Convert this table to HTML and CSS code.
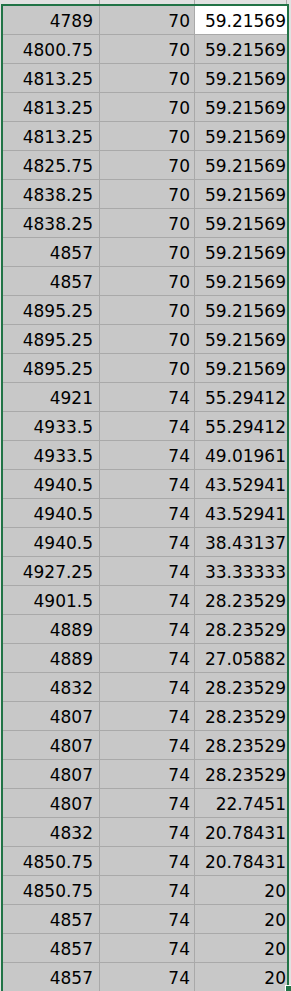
FILE: index.html
```html
<!DOCTYPE html>
<html>
<head>
<meta charset="utf-8">
<link rel="stylesheet" href="styles.css">
</head>
<body>
<div class="sheet">
  <div class="prev-row">
    <div class="pc c1"></div><div class="pc c2"></div><div class="pc c3"></div>
  </div>
  <div class="range">
    <div class="grid">
      <div class="cell c1">4789</div><div class="cell c2">70</div><div class="cell c3 active">59.21569</div>
      <div class="cell c1">4800.75</div><div class="cell c2">70</div><div class="cell c3">59.21569</div>
      <div class="cell c1">4813.25</div><div class="cell c2">70</div><div class="cell c3">59.21569</div>
      <div class="cell c1">4813.25</div><div class="cell c2">70</div><div class="cell c3">59.21569</div>
      <div class="cell c1">4813.25</div><div class="cell c2">70</div><div class="cell c3">59.21569</div>
      <div class="cell c1">4825.75</div><div class="cell c2">70</div><div class="cell c3">59.21569</div>
      <div class="cell c1">4838.25</div><div class="cell c2">70</div><div class="cell c3">59.21569</div>
      <div class="cell c1">4838.25</div><div class="cell c2">70</div><div class="cell c3">59.21569</div>
      <div class="cell c1">4857</div><div class="cell c2">70</div><div class="cell c3">59.21569</div>
      <div class="cell c1">4857</div><div class="cell c2">70</div><div class="cell c3">59.21569</div>
      <div class="cell c1">4895.25</div><div class="cell c2">70</div><div class="cell c3">59.21569</div>
      <div class="cell c1">4895.25</div><div class="cell c2">70</div><div class="cell c3">59.21569</div>
      <div class="cell c1">4895.25</div><div class="cell c2">70</div><div class="cell c3">59.21569</div>
      <div class="cell c1">4921</div><div class="cell c2">74</div><div class="cell c3">55.29412</div>
      <div class="cell c1">4933.5</div><div class="cell c2">74</div><div class="cell c3">55.29412</div>
      <div class="cell c1">4933.5</div><div class="cell c2">74</div><div class="cell c3">49.01961</div>
      <div class="cell c1">4940.5</div><div class="cell c2">74</div><div class="cell c3">43.52941</div>
      <div class="cell c1">4940.5</div><div class="cell c2">74</div><div class="cell c3">43.52941</div>
      <div class="cell c1">4940.5</div><div class="cell c2">74</div><div class="cell c3">38.43137</div>
      <div class="cell c1">4927.25</div><div class="cell c2">74</div><div class="cell c3">33.33333</div>
      <div class="cell c1">4901.5</div><div class="cell c2">74</div><div class="cell c3">28.23529</div>
      <div class="cell c1">4889</div><div class="cell c2">74</div><div class="cell c3">28.23529</div>
      <div class="cell c1">4889</div><div class="cell c2">74</div><div class="cell c3">27.05882</div>
      <div class="cell c1">4832</div><div class="cell c2">74</div><div class="cell c3">28.23529</div>
      <div class="cell c1">4807</div><div class="cell c2">74</div><div class="cell c3">28.23529</div>
      <div class="cell c1">4807</div><div class="cell c2">74</div><div class="cell c3">28.23529</div>
      <div class="cell c1">4807</div><div class="cell c2">74</div><div class="cell c3">28.23529</div>
      <div class="cell c1">4807</div><div class="cell c2">74</div><div class="cell c3">22.7451</div>
      <div class="cell c1">4832</div><div class="cell c2">74</div><div class="cell c3">20.78431</div>
      <div class="cell c1">4850.75</div><div class="cell c2">74</div><div class="cell c3">20.78431</div>
      <div class="cell c1">4850.75</div><div class="cell c2">74</div><div class="cell c3">20</div>
      <div class="cell c1">4857</div><div class="cell c2">74</div><div class="cell c3">20</div>
      <div class="cell c1">4857</div><div class="cell c2">74</div><div class="cell c3">20</div>
      <div class="cell c1">4857</div><div class="cell c2">74</div><div class="cell c3">20</div>
    </div>
  </div>
  <div class="fill-handle"></div>
</div>
</body>
</html>
```

FILE: styles.css
```css
html, body {
  margin: 0;
  padding: 0;
  background: #e1e1e1;
  overflow: hidden;
}

.sheet {
  position: relative;
  width: 291px;
  height: 991px;
  overflow: hidden;
  font-family: "DejaVu Sans", sans-serif;
  font-size: 17px;
  color: #000;
}

.prev-row {
  display: grid;
  grid-template-columns: 99px 95px 92px;
  height: 4px;
  padding-left: 1px;
}

.pc {
  border-right: 1px solid #a9a9a9;
}

.range {
  margin-left: 1px;
  width: 284px;
  border: 2px solid #217346;
  border-bottom: none;
  background: #c8c8c8;
}

.grid {
  display: grid;
  grid-template-columns: 97px 95px 92px;
  grid-auto-rows: 29px;
}

.cell {
  box-sizing: border-box;
  border-bottom: 1px solid #a9a9a9;
  display: flex;
  align-items: flex-end;
  justify-content: flex-end;
  padding-bottom: 3px;
  line-height: 20px;
  white-space: nowrap;
}

.c1 {
  border-right: 1px solid #a9a9a9;
  padding-right: 6px;
}

.c2 {
  border-right: 1px solid #a9a9a9;
  padding-right: 4px;
}

.c3 {
  padding-right: 1px;
}

.active {
  background: #ffffff;
}

.fill-handle {
  position: absolute;
  left: 285px;
  top: 985px;
  width: 6px;
  height: 6px;
  background: #217346;
  border-left: 1px solid #fff;
  border-top: 1px solid #fff;
}
```
